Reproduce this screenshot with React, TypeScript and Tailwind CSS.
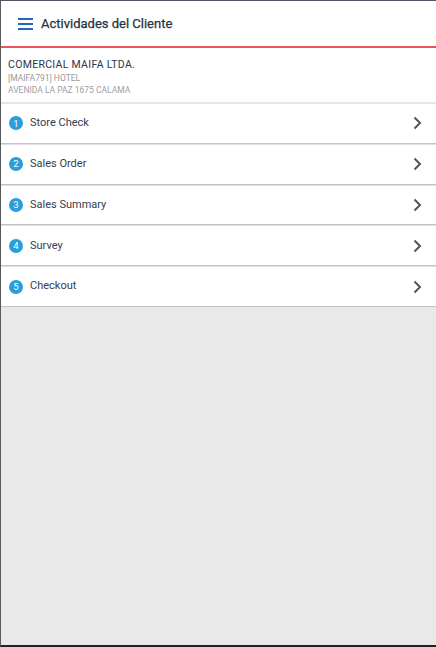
import React from "react";

const activities = [
  "Store Check",
  "Sales Order",
  "Sales Summary",
  "Survey",
  "Checkout",
];

export default function App() {
  return (
    <div
      className="w-[436px] h-[647px] flex flex-col bg-[#e9e9e9] border-t border-l border-b-2 border-t-[#4e5664] border-l-[#5a5a5a] border-b-[#222]"
      style={{ fontFamily: "Roboto, 'Liberation Sans', sans-serif" }}
    >
      {/* Header */}
      <header className="h-[47px] shrink-0 bg-white flex items-center pl-[17px] gap-[8px] border-b-2 border-[#e9545d]">
        <svg width="15" height="12" viewBox="0 0 15 12" className="mt-[1px]">
          <rect x="0" y="0" width="15" height="2" fill="#2467b8" />
          <rect x="0" y="5" width="15" height="2" fill="#2467b8" />
          <rect x="0" y="10" width="15" height="2" fill="#2467b8" />
        </svg>
        <span className="text-[13px] font-normal text-[#26323f] mt-[1px] [-webkit-text-stroke:0.25px_#26323f]">
          Actividades del Cliente
        </span>
      </header>

      {/* Client info */}
      <div className="h-[54px] shrink-0 bg-white pl-[7px] pt-[10px] flex flex-col">
        <span className="text-[10.5px] font-normal text-[#2a3647] leading-[14px] tracking-[0.3px]">
          COMERCIAL MAIFA LTDA.
        </span>
        <span className="text-[8.5px] text-[#9a9a9a] leading-[12px]">
          [MAIFA791] HOTEL
        </span>
        <span className="text-[8.5px] text-[#a0a0a0] leading-[12px]">
          AVENIDA LA PAZ 1675 CALAMA
        </span>
      </div>

      {/* Activities */}
      <div className="flex flex-col gap-[2px] pt-[2px] pb-[1px] bg-[#e6e6e6]">
        {activities.map((name, i) => (
          <div
            key={name}
            className="h-[38.8px] bg-white flex items-center pl-[8px] pr-[14px] shadow-[0_1px_1px_rgba(0,0,0,0.15)]"
          >
            <span className="w-[14px] h-[14px] rounded-full bg-[#2a9ddb] text-white text-[9.5px] flex items-center justify-center leading-none">
              {i + 1}
            </span>
            <span className="ml-[7px] text-[11px] text-[#35404f] flex-1">
              {name}
            </span>
            <svg width="9" height="14" viewBox="0 0 9 14">
              <path
                d="M1.5 1.5 L7 7 L1.5 12.5"
                fill="none"
                stroke="#555"
                strokeWidth="2"
              />
            </svg>
          </div>
        ))}
      </div>
      <div className="flex-1 bg-[#e9e9e9]" />
    </div>
  );
}
